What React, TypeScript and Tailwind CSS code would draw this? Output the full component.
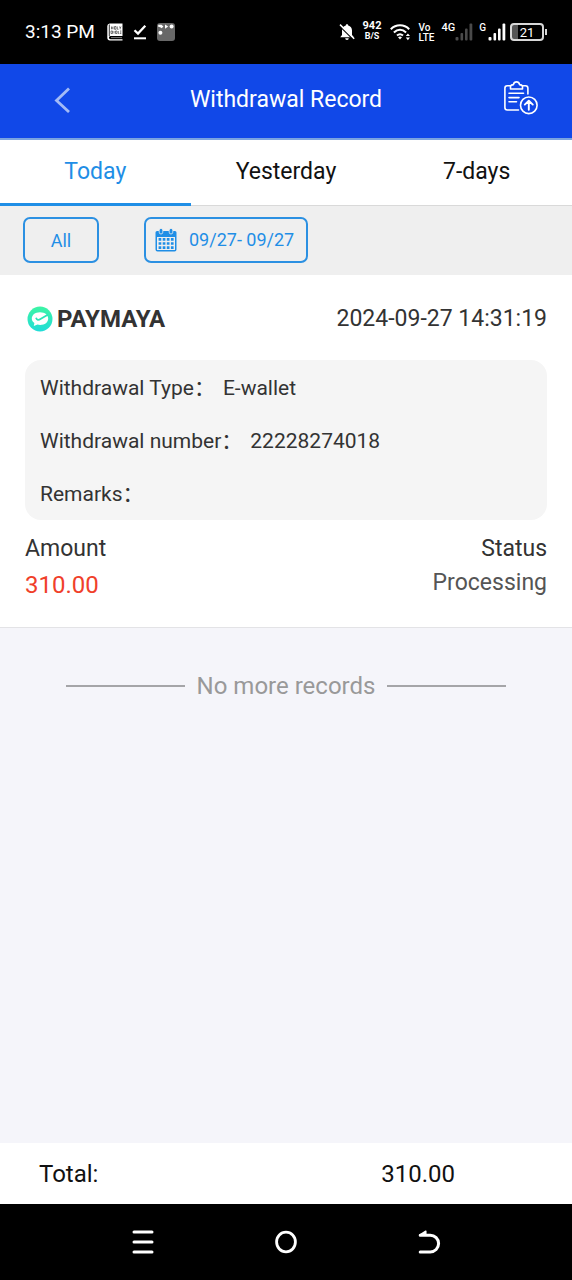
import { useState } from 'react';

const tabs = ['Today', 'Yesterday', '7-days'];

const record = {
  wallet: 'PAYMAYA',
  createdAt: '2024-09-27 14:31:19',
  amount: '310.00',
  status: 'Processing',
  details: [
    { label: 'Withdrawal Type', value: 'E-wallet' },
    { label: 'Withdrawal number', value: '22228274018' },
    { label: 'Remarks', value: '' },
  ],
};

function SignalBars({ dim = false }: { dim?: boolean }) {
  return (
    <svg width="18" height="18" viewBox="0 0 18 18" className={dim ? 'text-[#4a4a4a]' : 'text-white'}>
      <g fill="currentColor">
        <rect x="0.5" y="14" width="3" height="3.5" rx="1" />
        <rect x="5.5" y="10" width="2.6" height="7.5" rx="1" />
        <rect x="10" y="5.5" width="2.6" height="12" rx="1" />
        <rect x="14.5" y="0.5" width="2.8" height="17" rx="1" />
      </g>
    </svg>
  );
}

function StatusBar() {
  return (
    <div className="flex h-16 items-center justify-between bg-black pl-[25px] pr-[25px] text-white">
      <div className="flex items-center gap-[10px]">
        <span className="pr-[2px] text-[19px] leading-6">3:13 PM</span>
        {/* book */}
        <svg width="16" height="18" viewBox="0 0 16 18">
          <path d="M3 0.5H15.5V13H3.5A1.6 1.6 0 0 0 3.5 16.2H15.5V17.5H3A2.8 2.8 0 0 1 0.3 14.8V3A2.6 2.6 0 0 1 3 0.5Z" fill="#fff" />
          <path d="M2.3 1.5V13" stroke="#000" strokeWidth="0.8" />
          <path d="M4 14.6H15" stroke="#777" strokeWidth="1" />
          <path d="M4.5 3.5V6.3M6 3.5V6.3M4.5 5H6M7.5 3.5H9V6.3H7.5ZM10.3 3.5V6.3H11.5M12.5 3.5L13.2 5L14 3.5M13.2 5V6.3M4 8H5.5V10.5H4ZM7 8V10.5M8.5 8H10V10.5H8.5ZM11.3 8V10.5H12.3M13 8H14.3M13 9.2H14.3M13 10.5H14.3" stroke="#444" strokeWidth="0.7" fill="none" />
        </svg>
        <svg width="14" height="16" viewBox="0 0 14 16" fill="none" stroke="#fff">
          <path d="M1.5 6.2L5 9.6L12.3 1.8" strokeWidth="2.3" />
          <path d="M1 14.3H13" strokeWidth="2" />
        </svg>
        <svg width="18" height="18" viewBox="0 0 18 18">
          <rect width="18" height="18" rx="3" fill="#686868" />
          <g fill="#fff">
            <path d="M1.2 1.8H4.5L6.4 3.5L4.7 5.3L3.2 4.2L1.2 3.7Z" />
            <path d="M8 1.6L11.2 3.6L8 5.7Z" />
            <circle cx="14.6" cy="3.6" r="2" />
            <circle cx="3.4" cy="9.7" r="2" />
          </g>
        </svg>
      </div>

      <div className="flex items-center">
        <svg width="16" height="18" viewBox="0 0 16 18">
          <path d="M8 1.2C8.8 1.2 9.2 1.8 9.2 2.4C11.6 3 13 5 13 7.5V12L14.8 14.2H1.2L3 12V7.5C3 5 4.4 3 6.8 2.4C6.8 1.8 7.2 1.2 8 1.2Z" fill="#fff" />
          <path d="M6.2 15.2H9.8A1.8 1.8 0 0 1 6.2 15.2Z" fill="#fff" />
          <path d="M0.2 2.6L14.5 16.8" stroke="#000" strokeWidth="1.2" />
          <path d="M1 1.6L15.2 15.8" stroke="#fff" strokeWidth="1.5" />
        </svg>
        <div className="ml-2 flex flex-col items-center pb-[2px] font-bold">
          <span className="text-[11px] leading-[10px]">942</span>
          <span className="text-[9px] leading-[10px]">B/S</span>
        </div>
        <svg className="ml-2" width="21" height="18" viewBox="0 0 21 18" fill="none" stroke="#fff" strokeWidth="2.1">
          <path d="M0.8 6.2C6 1 14 1 19.2 6.2" />
          <path d="M3.9 9.4C7.6 6 12.4 6 16.1 9.4" />
          <path d="M7 12.5C8.9 10.9 11.1 10.9 13 12.5" />
          <path d="M8 14.2C9.2 13.2 10.8 13.2 12 14.2L10 16.4Z" fill="#fff" stroke="none" />
          <path d="M17.9 10.4L20 13H15.8ZM17.9 17.2L15.8 14.6H20Z" fill="#fff" stroke="none" />
        </svg>
        <div className="ml-2 flex flex-col font-medium">
          <span className="text-[10px] leading-[10px]">Vo</span>
          <span className="text-[10px] leading-[9px]">LTE</span>
        </div>
        <div className="ml-[7px] flex">
          <span className="text-[11px] font-medium leading-[10px]">4G</span>
          <SignalBars dim />
        </div>
        <div className="ml-[6px] flex gap-[2px]">
          <span className="text-[10px] font-medium leading-[10px]">G</span>
          <SignalBars />
        </div>
        <div className="ml-1 flex items-center gap-px">
          <div className="flex h-[18px] w-[34px] items-center justify-center rounded-[4px] border-2 border-[#d8d8d8] bg-linear-to-r from-[#555] from-20% to-black to-20% text-[13px] leading-none">
            21
          </div>
          <div className="h-[6px] w-[2px] bg-[#d8d8d8]" />
        </div>
      </div>
    </div>
  );
}

function Header() {
  return (
    <header className="grid h-[76px] grid-cols-[1fr_auto_1fr] items-center border-b-2 border-[#7ba4e0] bg-[#1148e8] pb-[2px] text-white">
      <button type="button" aria-label="Back" className="ml-[54px] justify-self-start">
        <svg width="17" height="26" viewBox="0 0 17 26" fill="none" stroke="#a3bbf6" strokeWidth="2.8">
          <path d="M15 1.5L2.5 13.5L15 25" />
        </svg>
      </button>
      <h1 className="text-[23px] leading-8">Withdrawal Record</h1>
      <button type="button" aria-label="Submit record" className="mr-[34px] justify-self-end pb-1">
        <svg width="34" height="34" viewBox="0 0 34 34" fill="none" stroke="#fff" strokeWidth="1.6" strokeLinecap="round" strokeLinejoin="round">
          <path d="M6.5 4.8H3.2A2.4 2.4 0 0 0 0.9 7.2V26.6A2.4 2.4 0 0 0 3.3 29H14.5" />
          <path d="M18.5 4.8H21.5A2.4 2.4 0 0 1 23.9 7.2V13" />
          <path d="M6.5 8V5.6C6.5 4.3 7.6 3.8 9.4 3.6C9.8 1.9 11 0.9 12.5 0.9S15.2 1.9 15.6 3.6C17.4 3.8 18.5 4.3 18.5 5.6V8Z" />
          <path d="M5 12.3H19.5M5 16.6H15M5 20.8H12.5" />
          <circle cx="24.8" cy="24.3" r="8.3" />
          <path d="M24.8 28.8V20.2M20.8 23.6L24.8 19.8L28.8 23.6" strokeWidth="1.9" />
        </svg>
      </button>
    </header>
  );
}

function CalendarIcon() {
  return (
    <svg width="22" height="24" viewBox="0 0 22 24">
      <path d="M2 3H20A1.5 1.5 0 0 1 21.5 4.5V21.5A2 2 0 0 1 19.5 23.5H2.5A2 2 0 0 1 0.5 21.5V4.5A1.5 1.5 0 0 1 2 3Z" fill="#1f8ee6" />
      <path d="M2 9H20V22H2Z" fill="#efefef" />
      <g fill="#1f8ee6" stroke="#efefef" strokeWidth="0.8">
        <rect x="4.2" y="0.4" width="3.6" height="5.6" rx="1.8" />
        <rect x="14.2" y="0.4" width="3.6" height="5.6" rx="1.8" />
      </g>
      <path d="M3.6 11.4H18.6M3.6 15.5H18.6M3.6 19.6H18.6" stroke="#1f8ee6" strokeWidth="2.7" strokeDasharray="2.7 1.4" />
    </svg>
  );
}

function WalletIcon() {
  return (
    <svg width="26" height="26" viewBox="0 0 26 26">
      <defs>
        <linearGradient id="wallet" x1="0" y1="0" x2="0" y2="1">
          <stop offset="0" stopColor="#3df5a4" />
          <stop offset="1" stopColor="#21dcd8" />
        </linearGradient>
      </defs>
      <circle cx="13" cy="13" r="12.5" fill="url(#wallet)" />
      <path d="M13 6.2C18 6.2 21.2 9 21.2 12.6C21.2 16.4 17.8 19 13.2 19C12.2 19 11.3 18.9 10.5 18.6L6.8 20L7.4 17.1C5.6 16 4.8 14.4 4.8 12.6C4.8 9 8 6.2 13 6.2Z" fill="#fff" />
      <path d="M9 11.8C9.8 14.2 11.5 14.4 13.5 13L20.8 8.8" fill="none" stroke="#2be5b8" strokeWidth="1.8" />
    </svg>
  );
}

function RecordCard() {
  return (
    <article className="border-b border-[#e3e3e6] bg-white px-[25px] pb-[22px] pt-7 text-[#333]">
      <div className="flex items-center justify-between">
        <div className="flex items-center gap-1 pl-[2px]">
          <WalletIcon />
          <h2 className="text-[24px] font-bold leading-8">{record.wallet}</h2>
        </div>
        <time className="text-[23px] leading-8">{record.createdAt}</time>
      </div>

      <dl className="mt-[25px] flex flex-col gap-[21px] rounded-[16px] bg-[#f5f5f5] px-[15px] pb-[10px] pt-3 text-[21px] leading-8">
        {record.details.map((item) => (
          <div key={item.label} className="flex gap-2">
            <dt>{item.label}：</dt>
            <dd>{item.value}</dd>
          </div>
        ))}
      </dl>

      <div className="mt-[13px] flex justify-between text-[23px]">
        <div>
          <p className="leading-8">Amount</p>
          <p className="text-[24px] leading-10 text-[#f0402a]">{record.amount}</p>
        </div>
        <div className="text-right">
          <p className="leading-8">Status</p>
          <p className="leading-9 text-[#555]">{record.status}</p>
        </div>
      </div>
    </article>
  );
}

function NavigationBar() {
  return (
    <nav className="flex h-[76px] items-center justify-center gap-[119px] bg-black">
      <button type="button" aria-label="Recent apps">
        <svg width="24" height="24" viewBox="0 0 24 24" stroke="#fff" strokeWidth="3" strokeLinecap="round">
          <path d="M3 2H21M3 12H21M3 22H21" />
        </svg>
      </button>
      <button type="button" aria-label="Home">
        <svg width="24" height="24" viewBox="0 0 24 24" fill="none" stroke="#fff" strokeWidth="2.8">
          <ellipse cx="12" cy="12" rx="9.4" ry="9.8" />
        </svg>
      </button>
      <button type="button" aria-label="Go back">
        <svg width="24" height="24" viewBox="0 0 24 24" fill="none" stroke="#fff" strokeWidth="3" strokeLinecap="round" strokeLinejoin="round">
          <path d="M3.2 5.2H13.2A8.2 8.2 0 0 1 13.2 22H3.2" />
          <path d="M3 4.8L8.8 1.2V5Z" fill="#fff" strokeWidth="1.5" />
        </svg>
      </button>
    </nav>
  );
}

export default function App() {
  const [activeTab, setActiveTab] = useState('Today');

  return (
    <div className="flex min-h-screen flex-col bg-[#f5f5fa] font-[Roboto,'Noto_Sans_CJK_SC',sans-serif]">
      <StatusBar />
      <Header />

      <div role="tablist" className="grid grid-cols-3 bg-white text-[23px] leading-8 text-[#111]">
        {tabs.map((tab) => (
          <button
            key={tab}
            type="button"
            role="tab"
            aria-selected={tab === activeTab}
            onClick={() => setActiveTab(tab)}
            className={
              tab === activeTab
                ? 'h-[66px] border-b-3 border-[#1f8ee6] text-[#1f8ee6]'
                : 'h-[66px] border-b border-[#d9d9d9] pb-[2px]'
            }
          >
            {tab}
          </button>
        ))}
      </div>

      <div className="flex gap-[45px] bg-[#efefef] px-[23px] pb-3 pt-[11px] text-[18px] text-[#1f8ee6]">
        <button type="button" className="h-[46px] w-[76px] rounded-[7px] border-2 border-[#2b90e2]">
          All
        </button>
        <button type="button" className="flex h-[46px] items-center gap-3 rounded-[7px] border-2 border-[#2b90e2] pl-[9px] pr-3">
          <CalendarIcon />
          <span className="pb-[2px]">09/27- 09/27</span>
        </button>
      </div>

      <main className="grow">
        <RecordCard />
        <div className="mt-10 flex items-center gap-3 px-[66px] text-[24px] leading-9 text-[#999]">
          <hr className="grow border-t-2 border-[#a5a5a8]" />
          <p>No more records</p>
          <hr className="grow border-t-2 border-[#a5a5a8]" />
        </div>
      </main>

      <footer className="grid grid-cols-[2fr_1fr] items-center bg-white pb-3 pt-[13px] text-[24px] leading-9 text-[#111]">
        <span className="pl-[39px]">Total:</span>
        <span>310.00</span>
      </footer>
      <NavigationBar />
    </div>
  );
}
